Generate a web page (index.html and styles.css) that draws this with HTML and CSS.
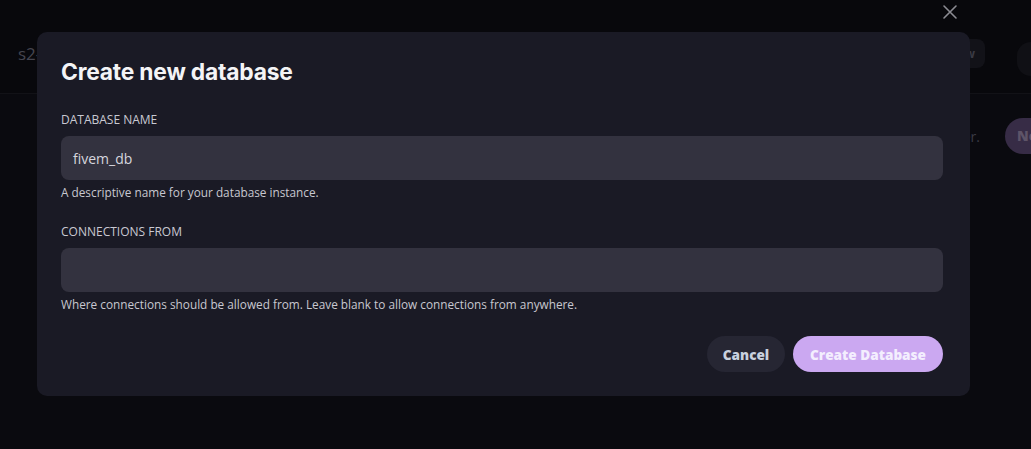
FILE: index.html
```html
<!DOCTYPE html>
<html lang="en">
<head>
<meta charset="utf-8">
<title>Create new database</title>
<link rel="stylesheet" href="styles.css">
</head>
<body>
<div class="page">
  <header class="topbar">
    <div class="brand">s2-fivem</div>
    <div class="actions">
      <span class="ghost w1"></span>
      <span class="ghost w2"></span>
      <span class="ghost w3">View</span>
      <span class="avatar"></span>
    </div>
  </header>
  <section class="content">
    <div class="hint">No databases have been created for this server.</div>
    <span class="newbtn">New</span>
  </section>
</div>

<div class="overlay">
  <button class="close" aria-label="Close">
    <svg width="16" height="16" viewBox="0 0 16 16"><path d="M2 2 L14 14 M14 2 L2 14" stroke="#8c8c93" stroke-width="1.6" stroke-linecap="round" fill="none"/></svg>
  </button>
  <div class="modal">
    <h2 class="title">Create new database</h2>
    <div class="field">
      <label class="label">DATABASE NAME</label>
      <div class="input">fivem_db</div>
      <p class="help">A descriptive name for your database instance.</p>
    </div>
    <div class="field">
      <label class="label">CONNECTIONS FROM</label>
      <div class="input"></div>
      <p class="help">Where connections should be allowed from. Leave blank to allow connections from anywhere.</p>
    </div>
    <div class="buttons">
      <button class="btn cancel">Cancel</button>
      <button class="btn primary">Create Database</button>
    </div>
  </div>
</div>
</body>
</html>
```

FILE: styles.css
```css
* { box-sizing: border-box; }
html, body { margin: 0; padding: 0; }
body {
  width: 1031px;
  height: 449px;
  overflow: hidden;
  background: #0a0a0f;
  font-family: "Open Sans", "Liberation Sans", sans-serif;
}
.page { height: 449px; }
.topbar {
  height: 94px;
  background: #08080c;
  border-bottom: 1px solid #121217;
  display: flex;
  align-items: flex-start;
  justify-content: space-between;
  padding: 0 0 0 18px;
}
.brand {
  margin-top: 42px;
  font-size: 17px;
  color: #45454f;
  white-space: nowrap;
}
.actions {
  display: flex;
  align-items: center;
  margin-top: 30px;
}
.ghost {
  height: 29px;
  border-radius: 8px;
  background: #121218;
  color: #3a3a44;
  font-size: 12px;
  font-weight: 700;
  display: flex;
  align-items: center;
  justify-content: flex-end;
  padding-right: 10px;
}
.w1 { width: 163px; margin-right: 36px; }
.w2 { width: 97px; margin-right: 37px; }
.w3 { width: 133px; margin-right: 32px; }
.avatar {
  width: 14px;
  height: 34px;
  border-radius: 17px 0 0 17px;
  background: #101015;
  margin-top: 12px;
}
.content {
  display: flex;
  justify-content: flex-end;
  align-items: center;
  padding-top: 24px;
  gap: 25px;
}
.hint {
  font-size: 14px;
  color: #3b3b45;
  white-space: nowrap;
}
.newbtn {
  height: 36px;
  width: 26px;
  border-radius: 18px 0 0 18px;
  background: #372c46;
  color: #5e5468;
  font-weight: 800;
  font-size: 14px;
  padding-left: 12px;
  line-height: 36px;
  white-space: nowrap;
  overflow: hidden;
}

.overlay {
  position: fixed;
  inset: 0;
  padding: 32px 0 0 37px;
}
.close {
  position: absolute;
  top: 4px;
  left: 942px;
  width: 16px;
  height: 16px;
  padding: 0;
  border: 0;
  background: transparent;
  display: flex;
}
.modal {
  width: 933px;
  background: #1a1a25;
  border-radius: 10px;
  padding: 24px 27px 24px 24px;
  display: flex;
  flex-direction: column;
  gap: 24px;
}
.title {
  margin: 0;
  font-family: Inter, "Open Sans", sans-serif;
  font-weight: 700;
  font-size: 22.8px;
  line-height: 32px;
  color: #f4f4f6;
  letter-spacing: -0.2px;
}
.field {
  display: flex;
  flex-direction: column;
}
.label {
  font-size: 12px;
  line-height: 16px;
  color: #c9c9d2;
  margin-bottom: 8px;
}
.input {
  height: 44px;
  background: #33323f;
  border-radius: 8px;
  padding: 0 12px;
  display: flex;
  align-items: center;
  font-size: 14px;
  color: #d6d6de;
}
.help {
  margin: 4px 0 0;
  font-size: 11.8px;
  line-height: 16px;
  color: #c8c8d0;
}
.buttons {
  display: flex;
  justify-content: flex-end;
  gap: 8px;
}
.btn {
  height: 36px;
  border: 0;
  border-radius: 18px;
  padding: 0;
  font-family: "Open Sans", sans-serif;
  font-weight: 800;
  font-size: 13.6px;
}
.cancel {
  background: #262633;
  color: #c9d0de;
  width: 78px;
}
.primary {
  background: #cba8f1;
  color: #f3eefe;
  width: 150px;
}
```
